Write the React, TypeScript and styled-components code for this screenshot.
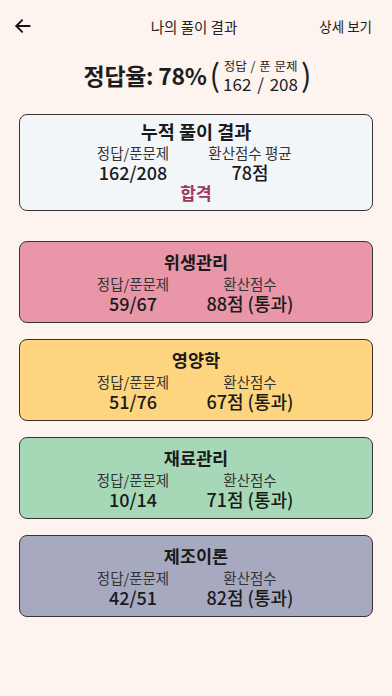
import React from 'react';
import styled, { createGlobalStyle } from 'styled-components';

const GlobalStyle = createGlobalStyle`
  html, body {
    margin: 0;
    padding: 0;
    background: #fdf3ef;
    font-family: "Noto Sans CJK KR", "Noto Sans", sans-serif;
    color: #1d1d1d;
  }
  * { box-sizing: border-box; }
`;

const Page = styled.div`
  width: 392px;
  min-height: 696px;
  background: #fdf3ef;
  display: flex;
  flex-direction: column;
`;

const TopBar = styled.div`
  height: 52px;
  display: grid;
  grid-template-columns: 80px 1fr 80px;
  align-items: center;
  padding: 0 20px 0 11px;
`;

const BackButton = styled.button`
  background: transparent;
  border: none;
  padding: 0;
  width: 24px;
  height: 24px;
  display: flex;
  align-items: center;
  justify-content: center;
  cursor: pointer;
`;

const TopTitle = styled.div`
  text-align: center;
  font-size: 14.5px;
  color: #222;
  margin-left: 5px;
`;

const DetailLink = styled.button`
  background: transparent;
  border: none;
  padding: 0;
  font-family: inherit;
  font-size: 13.5px;
  color: #222;
  justify-self: end;
  cursor: pointer;
`;

const Rate = styled.div`
  display: flex;
  align-items: center;
  justify-content: center;
  height: 46px;
  padding-left: 6px;
`;

const RateText = styled.span`
  font-size: 23px;
  font-weight: 700;
  letter-spacing: -0.3px;
`;

const Paren = styled.span`
  font-size: 31px;
  font-weight: 400;
  line-height: 1;
  margin: 0 3px;
  position: relative;
  top: -2px;
`;

const RateDetail = styled.div`
  display: flex;
  flex-direction: column;
  align-items: center;
`;

const RateSmall = styled.span`
  font-size: 12.5px;
  line-height: 16px;
  word-spacing: 1px;
`;

const RateNums = styled.span`
  font-size: 17px;
  line-height: 19px;
  word-spacing: 2px;
`;

const CardList = styled.div`
  display: flex;
  flex-direction: column;
  padding: 16px 19px 0;
`;

const Card = styled.div<{ $bg: string; $gap?: number }>`
  background: ${p => p.$bg};
  border: 1.5px solid #3a3230;
  border-radius: 8px;
  margin-bottom: ${p => p.$gap ?? 16}px;
  display: flex;
  flex-direction: column;
  align-items: center;
  padding: 8px 0 9px;
`;

const SummaryCard = styled(Card)`
  padding: 4px 0 7px;
`;

const CardTitle = styled.div<{ $size?: number }>`
  font-size: ${p => p.$size ?? 17.5}px;
  font-weight: 700;
  line-height: 24px;
  color: #1a1a1a;
`;

const Cols = styled.div`
  display: flex;
  justify-content: center;
  padding-right: 9px;
`;

const Col = styled.div`
  width: 117px;
  display: flex;
  flex-direction: column;
  align-items: center;
`;

const Label = styled.div`
  font-size: 14.5px;
  line-height: 20px;
  color: #333;
`;

const Value = styled.div`
  font-size: 18px;
  font-weight: 500;
  line-height: 19px;
  color: #1a1a1a;
`;

const Pass = styled.div`
  font-size: 17px;
  font-weight: 700;
  color: #a3335f;
  line-height: 20px;
  margin-top: 1px;
`;

const subjects = [
  { name: '위생관리', ratio: '59/67', score: '88점 (통과)', bg: '#e896a8' },
  { name: '영양학', ratio: '51/76', score: '67점 (통과)', bg: '#fdd57e' },
  { name: '재료관리', ratio: '10/14', score: '71점 (통과)', bg: '#a6d8b8' },
  { name: '제조이론', ratio: '42/51', score: '82점 (통과)', bg: '#a7a9c1' },
];

export default function App() {
  return (
    <Page>
      <GlobalStyle />
      <TopBar>
        <BackButton aria-label="back">
          <svg width="20" height="20" viewBox="0 0 24 24" fill="none" stroke="#111" strokeWidth="2.2" strokeLinecap="round" strokeLinejoin="round">
            <path d="M20 12H4" />
            <path d="M11 5l-7 7 7 7" />
          </svg>
        </BackButton>
        <TopTitle>나의 풀이 결과</TopTitle>
        <DetailLink>상세 보기</DetailLink>
      </TopBar>

      <Rate>
        <RateText>정답율: 78%</RateText>
        <Paren>(</Paren>
        <RateDetail>
          <RateSmall>정답 / 푼 문제</RateSmall>
          <RateNums>162 / 208</RateNums>
        </RateDetail>
        <Paren>)</Paren>
      </Rate>

      <CardList>
        <SummaryCard $bg="#f3f6f9" $gap={30}>
          <CardTitle $size={18.5}>누적 풀이 결과</CardTitle>
          <Cols>
            <Col>
              <Label>정답/푼문제</Label>
              <Value>162/208</Value>
            </Col>
            <Col>
              <Label>환산점수 평균</Label>
              <Value>78점</Value>
            </Col>
          </Cols>
          <Pass>합격</Pass>
        </SummaryCard>

        {subjects.map(s => (
          <Card key={s.name} $bg={s.bg}>
            <CardTitle>{s.name}</CardTitle>
            <Cols>
              <Col>
                <Label>정답/푼문제</Label>
                <Value>{s.ratio}</Value>
              </Col>
              <Col>
                <Label>환산점수</Label>
                <Value>{s.score}</Value>
              </Col>
            </Cols>
          </Card>
        ))}
      </CardList>
    </Page>
  );
}
